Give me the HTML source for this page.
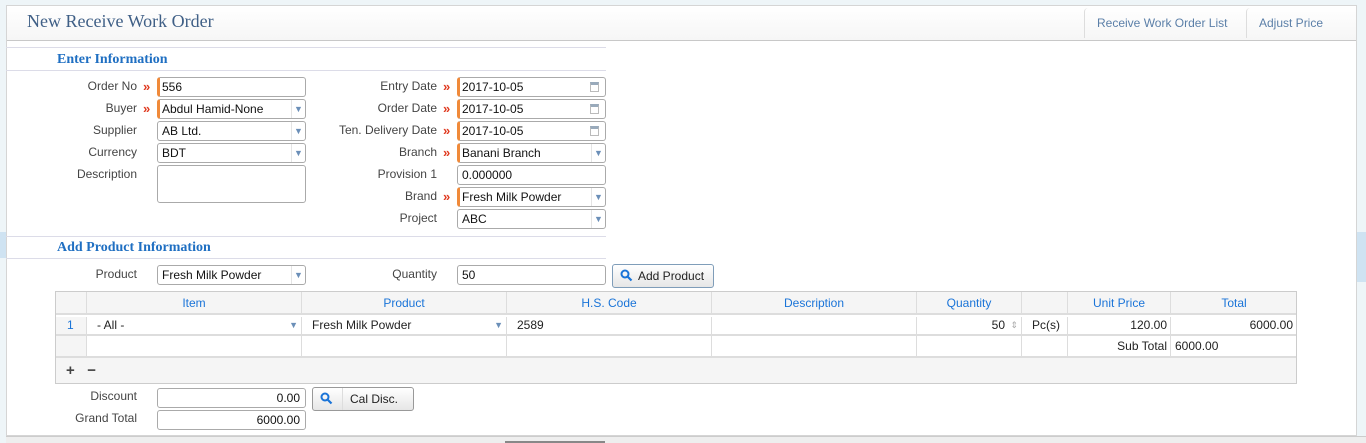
<!DOCTYPE html>
<html><head><meta charset="utf-8"><style>
*{box-sizing:border-box;margin:0;padding:0}
body{width:1366px;height:443px;background:#eef5f8;font-family:"Liberation Sans",sans-serif;font-size:12px;color:#222;position:relative;overflow:hidden}
.a{position:absolute}
#panel{left:6px;top:5px;width:1351px;height:431px;background:#fff;border:1px solid #d5d5d5}
.hdr{left:7px;top:6px;width:1349px;height:35px;background:linear-gradient(#fff,#f6f6f6);border-bottom:1px solid #c8c8c8}
.title{left:27px;top:11px;font-family:"Liberation Serif",serif;font-size:18px;color:#3f5f86}
.tab{top:8px;height:30px;border-left:1px solid #ddd;border-radius:4px 0 0 0;color:#5b7fa8;font-size:12px;line-height:30px;padding-left:12px}
.sec{font-family:"Liberation Serif",serif;font-size:14px;color:#1f6fc2;font-weight:bold}
.ln{height:1px;background:#dcdce8}
.lb{text-align:right;width:140px;color:#444}
.lb2{text-align:right;width:140px;color:#444}
.in{height:20px;border:1px solid #aaa;border-radius:3px;background:#fff;padding-left:4px;line-height:18px;font-size:12px;color:#111}
.req{border-left:3px solid #f08a3a;padding-left:2px}
.ar{color:#e03a20;font-size:13px;font-weight:bold}
.dd{position:absolute;right:0;top:0;width:14px;height:18px;border-left:1px solid #e4e4e4;color:#6b8fb8;font-size:9px;text-align:center;line-height:18px}
.cal{position:absolute;right:6px;top:4px;width:9px;height:10px;border:1px solid #bbb;border-top:3px solid #9ab}
.btn{height:24px;border:1px solid #999;border-radius:3px;background:linear-gradient(#fff,#e6e6e6);font-size:12px;line-height:22px}
.th{position:absolute;top:0;height:23px;border-right:1px solid #ddd;color:#1a74d8;text-align:center;line-height:23px}
.cell{position:absolute;height:100%;border-right:1px solid #ddd}
.r{text-align:right}
.mg{position:absolute;left:7px;top:4px}
</style></head><body>
<div class="a" style="left:0;top:232px;width:6px;height:26px;background:#cfe3f2"></div>
<div class="a" style="left:1357px;top:232px;width:9px;height:50px;background:#cfe3f2"></div>
<div id="panel" class="a"></div>
<div class="a hdr"></div>
<div class="a title">New Receive Work Order</div>
<div class="a tab" style="left:1084px;width:162px">Receive Work Order List</div>
<div class="a tab" style="left:1246px;width:100px">Adjust Price</div>
<div class="a" style="left:6px;top:436px;width:1360px;height:7px;background:#eee;border-top:1px solid #ccc"></div>
<div class="a" style="left:505px;top:441px;width:100px;height:2px;background:#888"></div>

<div class="a ln" style="left:6px;top:47px;width:600px"></div>
<div class="a sec" style="left:57px;top:52px">Enter Information</div>
<div class="a ln" style="left:6px;top:70px;width:600px"></div>

<div class="a lb" style="left:-3px;top:79px">Order No</div><div class="a ar" style="left:143px;top:79px">»</div>
<div class="a in req" style="left:157px;top:77px;width:149px">556</div>
<div class="a lb" style="left:-3px;top:101px">Buyer</div><div class="a ar" style="left:143px;top:101px">»</div>
<div class="a in req" style="left:157px;top:99px;width:149px">Abdul Hamid-None<span class="dd">▼</span></div>
<div class="a lb" style="left:-3px;top:123px">Supplier</div>
<div class="a in" style="left:157px;top:121px;width:149px">AB Ltd.<span class="dd">▼</span></div>
<div class="a lb" style="left:-3px;top:145px">Currency</div>
<div class="a in" style="left:157px;top:143px;width:149px">BDT<span class="dd">▼</span></div>
<div class="a lb" style="left:-3px;top:167px">Description</div>
<div class="a in" style="left:157px;top:165px;width:149px;height:38px"></div>

<div class="a lb2" style="left:297px;top:79px">Entry Date</div><div class="a ar" style="left:443px;top:79px">»</div>
<div class="a in req" style="left:457px;top:77px;width:149px">2017-10-05<span class="cal"></span></div>
<div class="a lb2" style="left:297px;top:101px">Order Date</div><div class="a ar" style="left:443px;top:101px">»</div>
<div class="a in req" style="left:457px;top:99px;width:149px">2017-10-05<span class="cal"></span></div>
<div class="a lb2" style="left:297px;top:123px">Ten. Delivery Date</div><div class="a ar" style="left:443px;top:123px">»</div>
<div class="a in req" style="left:457px;top:121px;width:149px">2017-10-05<span class="cal"></span></div>
<div class="a lb2" style="left:297px;top:145px">Branch</div><div class="a ar" style="left:443px;top:145px">»</div>
<div class="a in req" style="left:457px;top:143px;width:149px">Banani Branch<span class="dd">▼</span></div>
<div class="a lb2" style="left:297px;top:167px">Provision 1</div>
<div class="a in" style="left:457px;top:165px;width:149px">0.000000</div>
<div class="a lb2" style="left:297px;top:189px">Brand</div><div class="a ar" style="left:443px;top:189px">»</div>
<div class="a in req" style="left:457px;top:187px;width:149px">Fresh Milk Powder<span class="dd">▼</span></div>
<div class="a lb2" style="left:297px;top:211px">Project</div>
<div class="a in" style="left:457px;top:209px;width:149px">ABC<span class="dd">▼</span></div>

<div class="a ln" style="left:6px;top:236px;width:600px"></div>
<div class="a sec" style="left:57px;top:240px">Add Product Information</div>
<div class="a ln" style="left:6px;top:258px;width:600px"></div>

<div class="a lb" style="left:-3px;top:267px">Product</div>
<div class="a in" style="left:157px;top:265px;width:149px">Fresh Milk Powder<span class="dd">▼</span></div>
<div class="a lb2" style="left:297px;top:267px">Quantity</div>
<div class="a in" style="left:457px;top:265px;width:149px">50</div>
<div class="a btn" style="left:612px;top:264px;width:102px;padding-left:25px;border-color:#7f9db9">Add Product<svg class="mg" width="13" height="13" viewBox="0 0 13 13"><circle cx="5" cy="5" r="3.5" fill="none" stroke="#1a74d8" stroke-width="2"/><path d="M7.5 7.5L11.5 11.5" stroke="#1a74d8" stroke-width="2.2"/></svg></div>

<div class="a" style="left:55px;top:291px;width:1242px;height:93px;border:1px solid #ccc;background:#fff">
 <div class="a" style="left:0;top:0;width:1240px;height:23px;background:#f5f5f5;border-bottom:2px solid #ddd"></div>
 <div class="th" style="left:0;width:31px"></div>
 <div class="th" style="left:31px;width:215px">Item</div>
 <div class="th" style="left:246px;width:205px">Product</div>
 <div class="th" style="left:451px;width:205px">H.S. Code</div>
 <div class="th" style="left:656px;width:205px">Description</div>
 <div class="th" style="left:861px;width:105px">Quantity</div>
 <div class="th" style="left:966px;width:46px"></div>
 <div class="th" style="left:1012px;width:103px">Unit Price</div>
 <div class="th" style="left:1115px;width:126px;border:none">Total</div>
 <div class="a" style="left:0;top:25px;width:1240px;height:19px;border-bottom:2px solid #ddd;line-height:17px">
  <div class="cell" style="left:0;width:31px;background:#f5f5f5;color:#1a74d8;padding-left:11px">1</div>
  <div class="cell" style="left:31px;width:215px;padding-left:10px">- All -<span class="a" style="right:3px;color:#6b8fb8;font-size:9px">▼</span></div>
  <div class="cell" style="left:246px;width:205px;padding-left:10px">Fresh Milk Powder<span class="a" style="right:3px;color:#6b8fb8;font-size:9px">▼</span></div>
  <div class="cell" style="left:451px;width:205px;padding-left:10px">2589</div>
  <div class="cell" style="left:656px;width:205px"></div>
  <div class="cell r" style="left:861px;width:105px;padding-right:16px">50<span class="a" style="right:3px;color:#aaa;font-size:9px">⇕</span></div>
  <div class="cell" style="left:966px;width:46px;padding-left:10px">Pc(s)</div>
  <div class="cell r" style="left:1012px;width:103px;padding-right:3px">120.00</div>
  <div class="cell r" style="left:1115px;width:126px;padding-right:4px;border:none">6000.00</div>
 </div>
 <div class="a" style="left:0;top:44px;width:1240px;height:22px;border-bottom:2px solid #ddd;line-height:20px">
  <div class="cell" style="left:0;width:31px;background:#f5f5f5"></div>
  <div class="cell" style="left:31px;width:215px"></div>
  <div class="cell" style="left:246px;width:205px"></div>
  <div class="cell" style="left:451px;width:205px"></div>
  <div class="cell" style="left:656px;width:205px"></div>
  <div class="cell" style="left:861px;width:105px"></div>
  <div class="cell" style="left:966px;width:46px"></div>
  <div class="cell r" style="left:1012px;width:103px;padding-right:3px">Sub Total</div>
  <div class="cell" style="left:1115px;width:126px;padding-left:4px;border:none">6000.00</div>
 </div>
 <div class="a" style="left:0;top:66px;width:1240px;height:25px;background:#f5f5f5;line-height:25px;font-size:15px;color:#444;padding-left:10px;font-weight:bold">+&nbsp;&nbsp;&nbsp;−</div>
</div>

<div class="a lb" style="left:-3px;top:389px">Discount</div>
<div class="a in r" style="left:157px;top:388px;width:149px;padding-right:5px">0.00</div>
<div class="a btn" style="left:312px;top:387px;width:102px;padding-left:37px">Cal Disc.<svg class="mg" width="13" height="13" viewBox="0 0 13 13"><circle cx="5" cy="5" r="3.5" fill="none" stroke="#1a74d8" stroke-width="2"/><path d="M7.5 7.5L11.5 11.5" stroke="#1a74d8" stroke-width="2.2"/></svg><span class="a" style="left:29px;top:0;height:22px;border-left:1px solid #ddd"></span></div>
<div class="a lb" style="left:-3px;top:411px">Grand Total</div>
<div class="a in r" style="left:157px;top:410px;width:149px;padding-right:5px">6000.00</div>
</body></html>
